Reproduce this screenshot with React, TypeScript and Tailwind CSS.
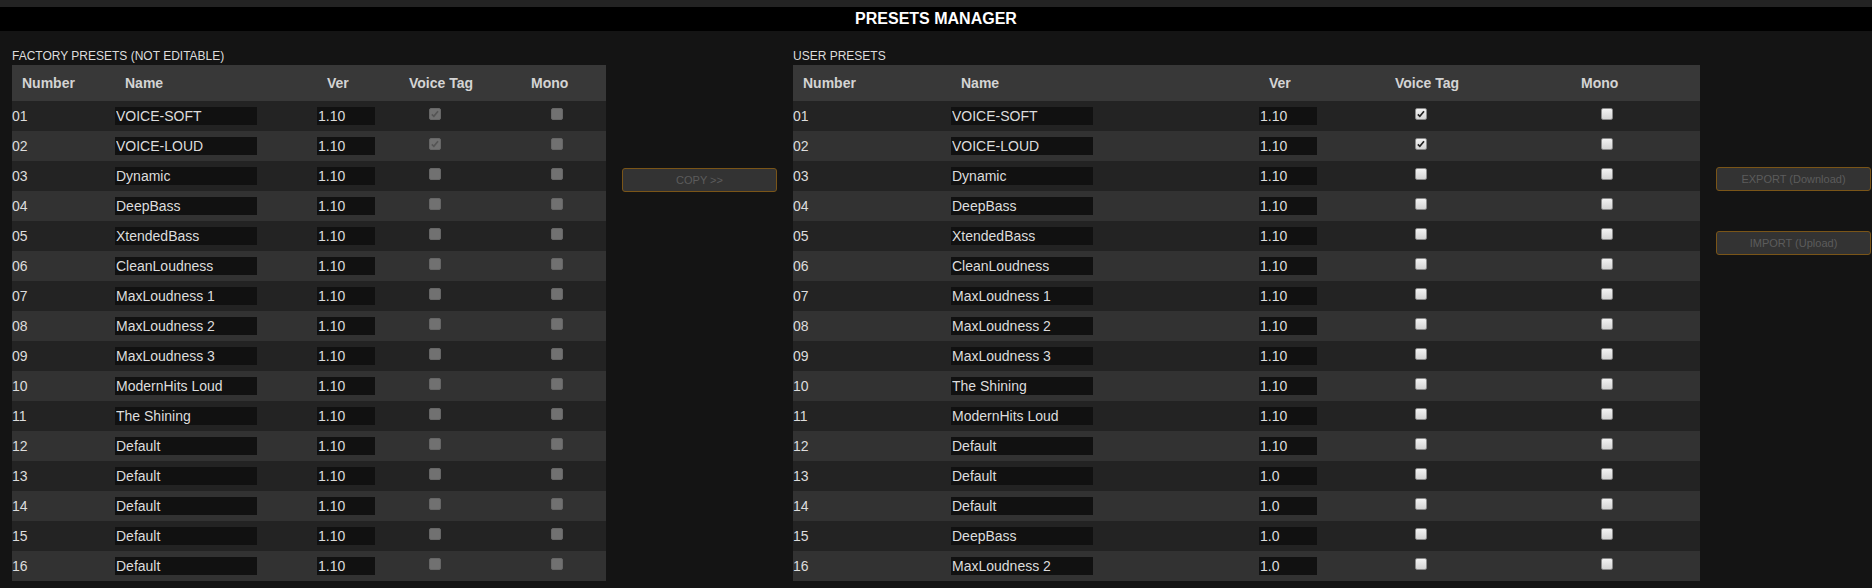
import React from 'react';

interface Preset {
    num: string;
    name: string;
    ver: string;
    voice: boolean;
    mono: boolean;
}

const factoryNames = [
    'VOICE-SOFT', 'VOICE-LOUD', 'Dynamic', 'DeepBass', 'XtendedBass', 'CleanLoudness',
    'MaxLoudness 1', 'MaxLoudness 2', 'MaxLoudness 3', 'ModernHits Loud', 'The Shining',
    'Default', 'Default', 'Default', 'Default', 'Default',
];

const userRows: [string, string][] = [
    ['VOICE-SOFT', '1.10'], ['VOICE-LOUD', '1.10'], ['Dynamic', '1.10'], ['DeepBass', '1.10'],
    ['XtendedBass', '1.10'], ['CleanLoudness', '1.10'], ['MaxLoudness 1', '1.10'],
    ['MaxLoudness 2', '1.10'], ['MaxLoudness 3', '1.10'], ['The Shining', '1.10'],
    ['ModernHits Loud', '1.10'], ['Default', '1.10'], ['Default', '1.0'], ['Default', '1.0'],
    ['DeepBass', '1.0'], ['MaxLoudness 2', '1.0'],
];

const pad = (i: number) => String(i + 1).padStart(2, '0');

const factoryPresets: Preset[] = factoryNames.map((name, i) => ({
    num: pad(i), name, ver: '1.10', voice: i < 2, mono: false,
}));

const userPresets: Preset[] = userRows.map(([name, ver], i) => ({
    num: pad(i), name, ver, voice: i < 2, mono: false,
}));

// fake checkbox that looks like the old chrome one
function Box({ checked, disabled }: { checked: boolean; disabled: boolean }): React.JSX.Element {
    const cls = disabled
        ? 'bg-[#717171] border-[#666]'
        : 'bg-gradient-to-b from-[#f2f2f2] to-[#d4d4d4] border-[#8a8a8a]';
    return (
        <span className={`mt-[7px] ml-[30px] flex h-[12px] w-[12px] items-center justify-center rounded-[2px] border ${cls}`}>
            {checked && (
                <svg viewBox="0 0 12 12" className="h-[10px] w-[10px]">
                    <path
                        d="M2.2 6.4 L4.6 8.8 L9.6 2.6"
                        fill="none"
                        stroke={disabled ? '#555' : '#222'}
                        strokeWidth="2"
                    />
                </svg>
            )}
        </span>
    );
}

interface TableProps {
    title: string;
    rows: Preset[];
    cols: string;
    width: string;
    disabled: boolean;
}

function PresetTable({ title, rows, cols, width, disabled }: TableProps): React.JSX.Element {
    const headers = ['Number', 'Name', 'Ver', 'Voice Tag', 'Mono'];
    return (
        <div className={`${width} shrink-0`}>
            <div className="text-[12px] leading-[17px] text-[#ddd]">{title}</div>
            <div className={`grid ${cols} h-[36px] bg-[#383838]`}>
                {headers.map((h) => (
                    <div key={h} className="flex items-center pl-[10px] text-[14px] font-bold text-[#d4d4d4]">
                        {h}
                    </div>
                ))}
            </div>
            {rows.map((r, i) => (
                <div
                    key={r.num}
                    className={`grid ${cols} h-[30px] text-[14px] text-[#ddd] ${i % 2 === 0 ? 'bg-[#232323]' : 'bg-[#323232]'}`}
                >
                    <div className="flex items-center">{r.num}</div>
                    <div className="flex items-center">
                        <input
                            type="text"
                            readOnly
                            defaultValue={r.name}
                            className="h-[18px] w-[142px] bg-[#111] px-px text-[14px] text-[#ddd] outline-none"
                        />
                    </div>
                    <div className="flex items-center">
                        <input
                            type="text"
                            readOnly
                            defaultValue={r.ver}
                            className="h-[18px] w-[58px] bg-[#111] px-px text-[14px] text-[#ddd] outline-none"
                        />
                    </div>
                    <div className="flex items-start">
                        <Box checked={r.voice} disabled={disabled} />
                    </div>
                    <div className="flex items-start">
                        <Box checked={r.mono} disabled={disabled} />
                    </div>
                </div>
            ))}
        </div>
    );
}

function DimButton({ label }: { label: string }): React.JSX.Element {
    return (
        <button
            type="button"
            disabled
            className="h-[24px] w-[155px] rounded-[3px] border border-[#7a5518] bg-[#333] text-[11px] text-[#5c5c5c]"
        >
            {label}
        </button>
    );
}

export default function App(): React.JSX.Element {
    return (
        <div className="min-h-screen bg-[#141414] font-['Liberation_Sans',Arial,sans-serif]">
            <div className="h-[7px] bg-[#232323]" />
            <div className="h-[24px] bg-black text-center text-[16px] font-bold leading-[24px] text-white">
                PRESETS MANAGER
            </div>

            <div className="flex gap-4 pl-[12px] pt-[17px]">
                <PresetTable
                    title="FACTORY PRESETS (NOT EDITABLE)"
                    rows={factoryPresets}
                    cols="grid-cols-[103px_202px_82px_122px_85px]"
                    width="w-[594px]"
                    disabled
                />

                <div className="w-[155px] shrink-0 pt-[119px]">
                    <DimButton label="COPY >>" />
                </div>

                <PresetTable
                    title="USER PRESETS"
                    rows={userPresets}
                    cols="grid-cols-[158px_308px_126px_186px_129px]"
                    width="w-[907px]"
                    disabled={false}
                />

                <div className="flex w-[155px] shrink-0 flex-col gap-[40px] pt-[119px]">
                    <DimButton label="EXPORT (Download)" />
                    <DimButton label="IMPORT (Upload)" />
                </div>
            </div>
        </div>
    );
}
